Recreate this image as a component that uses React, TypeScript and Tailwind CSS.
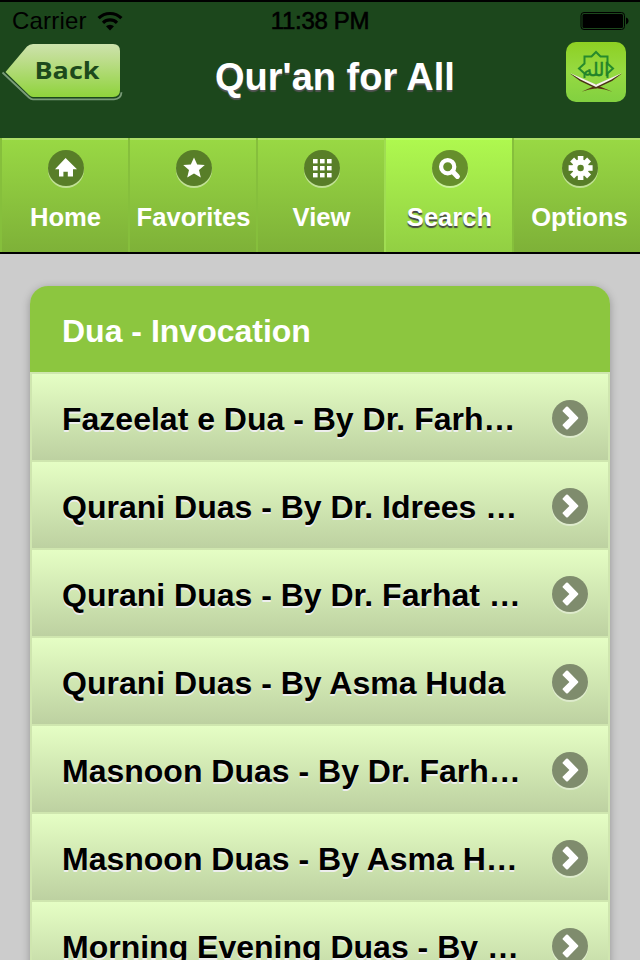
import type { ReactNode } from "react";

type IconName = "home" | "star" | "grid" | "search" | "gear";

interface Tab {
  label: string;
  icon: IconName;
  active?: boolean;
}

const tabs: Tab[] = [
  { label: "Home", icon: "home" },
  { label: "Favorites", icon: "star" },
  { label: "View", icon: "grid" },
  { label: "Search", icon: "search", active: true },
  { label: "Options", icon: "gear" },
];

const duas = [
  "Fazeelat e Dua - By Dr. Farh…",
  "Qurani Duas - By Dr. Idrees …",
  "Qurani Duas - By Dr. Farhat …",
  "Qurani Duas - By Asma Huda",
  "Masnoon Duas - By Dr. Farh…",
  "Masnoon Duas - By Asma H…",
  "Morning Evening Duas - By …",
];

const gearTeeth = [0, 45, 90, 135];

const iconShapes: Record<IconName, ReactNode> = {
  home: (
    <path d="M17.6 8 29 19.3h-4v7.3h-5.2v-4.8h-4.4v4.8H11v-7.3H7z" fill="#fff" />
  ),
  star: (
    <path
      d="M18 7.4l3.2 7 7.6.7-5.8 5 1.8 7.4-6.8-4-6.8 4 1.8-7.4-5.8-5 7.6-.7z"
      fill="#fff"
    />
  ),
  grid: (
    <g fill="#fff">
      {[9, 16, 23].map((y) =>
        [9, 16, 23].map((x) => (
          <rect key={`${x}-${y}`} x={x} y={y} width="4.6" height="4.4" />
        )),
      )}
    </g>
  ),
  search: (
    <g fill="none" stroke="#fff">
      <circle cx="15.7" cy="16.7" r="6.6" strokeWidth="4.2" />
      <path d="M20.6 21.6l4.8 4.8" strokeWidth="5" strokeLinecap="round" />
    </g>
  ),
  gear: (
    <g>
      {gearTeeth.map((angle) => (
        <rect
          key={angle}
          x="15.8"
          y="6"
          width="5.6"
          height="24"
          fill="#fff"
          transform={`rotate(${angle} 18.6 18)`}
        />
      ))}
      <circle cx="18.6" cy="18" r="8.4" fill="#fff" />
      <circle cx="18.6" cy="18" r="3.2" fill="#5a8128" />
    </g>
  ),
};

export default function App() {
  return (
    <div className="h-[960px] w-[640px] overflow-hidden bg-[#cccccc] font-['Liberation_Sans',Arial,sans-serif]">
      <header className="h-[138px] border-t-2 border-black bg-[#1c471c]">
        <StatusBar />
        <div className="grid h-[64px] grid-cols-[124px_1fr_94px] items-start">
          <BackButton />
          <h1 className="pt-[15px] text-center text-[38px] leading-[44px] font-bold whitespace-nowrap text-white [text-shadow:0_2px_1px_#555]">
            Qur'an for All
          </h1>
          <Logo />
        </div>
      </header>
      <nav className="flex h-[116px] w-[646px] border-b-2 border-black">
        {tabs.map((tab) => (
          <TabItem key={tab.label} tab={tab} />
        ))}
      </nav>
      <main className="px-[30px] pt-8">
        <div className="rounded-t-[18px] shadow-[0_2px_8px_rgba(0,0,0,0.28)]">
          <h2 className="h-[86px] rounded-t-[18px] bg-[#8cc63f] pt-[27px] pl-8 text-[32px] leading-9 font-bold text-white">
            Dua - Invocation
          </h2>
          <ul>
            {duas.map((title) => (
              <li
                key={title}
                className="flex h-[88px] items-center justify-between border-x-2 border-t-2 border-[#cfe6af] bg-linear-to-b from-[#e5fec4] to-[#bdd1a1] bg-clip-padding pr-[20px] pl-[30px]"
              >
                <span className="pt-[3px] text-[32px] leading-9 font-bold whitespace-nowrap text-black [text-shadow:0_2px_0_#eee]">
                  {title}
                </span>
                <Chevron />
              </li>
            ))}
          </ul>
        </div>
      </main>
    </div>
  );
}

const StatusBar = () => (
  <div className="grid h-[38px] grid-cols-[1fr_100px_1fr] items-center text-2xl leading-[38px] text-black">
    <div className="flex items-center gap-[11px] pl-3">
      <span className="tracking-[0.2px]">Carrier</span>
      <svg className="mb-px -ml-px" width="26" height="20" viewBox="0 0 26 20">
        <g fill="none" stroke="#000" strokeWidth="3.2">
          <path d="M1.6 7.2a16.2 16.2 0 0 1 22.8 0" />
          <path d="M6 11.8a10 10 0 0 1 14 0" />
        </g>
        <path d="M13 19.5l-4-4.2a5.8 5.8 0 0 1 8 0z" />
      </svg>
    </div>
    <span className="text-center tracking-[-0.3px] whitespace-nowrap [-webkit-text-stroke:0.6px_#000]">
      11:38 PM
    </span>
    <svg className="mr-[10px] justify-self-end" width="50" height="20" viewBox="0 0 50 20">
      <rect x="1" y="1.5" width="43.5" height="17" rx="3" fill="none" stroke="#000" />
      <rect x="2.5" y="3" width="40.5" height="14" rx="1.5" />
      <path d="M46 6.6c3.4.8 3.4 6 0 6.8z" />
    </svg>
  </div>
);

const BackButton = () => (
  <svg width="124" height="64" viewBox="0 0 124 64">
    <defs>
      <linearGradient id="back-fill" x1="0" y1="0" x2="0" y2="1">
        <stop offset="0" stopColor="#cde2ad" />
        <stop offset="0.3" stopColor="#bddd8c" />
        <stop offset="1" stopColor="#8fd33c" />
      </linearGradient>
    </defs>
    <path
      d="M2.5 32.5L29 57.5q2 1.8 4 1.8h81q7 0 7.5-7"
      fill="none"
      stroke="#7a9c79"
      strokeWidth="1.8"
    />
    <path
      d="M5.5 32L27 6.5q2.5-2.5 6-2.5h80q7 0 7 7v39q0 7-7 7H33q-2 0-4-2z"
      fill="url(#back-fill)"
    />
    <text
      x="34.5"
      y="39.3"
      textLength="65"
      lengthAdjust="spacingAndGlyphs"
      fill="#1d4a1c"
      className="font-['Open_Sans',sans-serif] text-[23px] font-bold"
    >
      Back
    </text>
  </svg>
);

const Logo = () => (
  <svg className="mt-0.5 ml-5" width="60" height="60" viewBox="0 0 60 60">
    <defs>
      <linearGradient id="logo-fill" x1="0" y1="0" x2="0" y2="1">
        <stop offset="0" stopColor="#8ed023" />
        <stop offset="0.5" stopColor="#96da42" />
        <stop offset="1" stopColor="#82d040" />
      </linearGradient>
    </defs>
    <rect width="60" height="60" rx="10" fill="url(#logo-fill)" />
    <path
      d="M18.5 36v-4.500L13 26.500l5.500-5V14.500h7L30 10l4.500 4.500h7v7l5.500 5-5.500 5V36"
      fill="none"
      stroke="#268a2c"
      strokeWidth="2"
    />
    <text
      x="30.3"
      y="33.5"
      textAnchor="middle"
      fill="#218229"
      stroke="#218229"
      strokeWidth="0.5"
      className="font-['DejaVu_Sans',sans-serif] text-[18px]"
    >
      الله
    </text>
    <path
      d="M33 42L15.500 49.800Q23 46.800 31 46.300q8 .5 15.500 3.500L28 42z"
      fill="#583413"
    />
    <path d="M4 31.500L14 39l16 7.500L46 39l10-7.500L30 43z" fill="#4a3316" />
    <path d="M4 31l26 11.500L56 31l-10.500 6.500L30 45l-15.500-7.500z" fill="#f7f4ec" />
  </svg>
);

const TabItem = ({ tab }: { tab: Tab }) => (
  <div
    className={
      tab.active
        ? "flex w-32 flex-col items-center border-l-2 border-[#a0dd52] bg-linear-to-b from-[#aff94f] to-[#92cf43] pt-3 pl-0.5 shadow-[inset_0_2px_0_#b8fb68]"
        : "flex w-32 flex-col items-center border-l-2 border-[#86bf3c] bg-linear-to-b from-[#99d944] to-[#7eb138] pt-3 pl-0.5 shadow-[inset_0_2px_0_#addf68] last:w-[134px] last:pl-0"
    }
  >
    <svg width="36" height="38" viewBox="0 0 36 38" className="shrink-0">
      <circle cx="18" cy="20" r="18" fill="#fff" fillOpacity="0.45" />
      <circle cx="18" cy="18" r="18" fill={tab.active ? "#668f2c" : "#587e28"} />
      {iconShapes[tab.icon]}
    </svg>
    <span
      className={`mt-[14px] -ml-px text-[25.6px] leading-[30px] font-bold text-white ${
        tab.active ? "[text-shadow:0_2px_1px_#444]" : ""
      }`}
    >
      {tab.label}
    </span>
  </div>
);

const Chevron = () => (
  <svg width="36" height="38" viewBox="0 0 36 38" className="mt-1 shrink-0">
    <circle cx="18" cy="20" r="18" fill="#fff" fillOpacity="0.4" />
    <circle cx="18" cy="18" r="18" fill="#7f8c6d" />
    <path
      d="M10.800 10.200l3.400-3.400q.8-.6 1.600 0L26 17.200q.8.800 0 1.600L15.800 29.200q-.8.600-1.600 0l-3.400-3.400q-.6-.8 0-1.400L17.400 18l-6.600-6.400q-.6-.6 0-1.400z"
      fill="#fff"
    />
  </svg>
);
